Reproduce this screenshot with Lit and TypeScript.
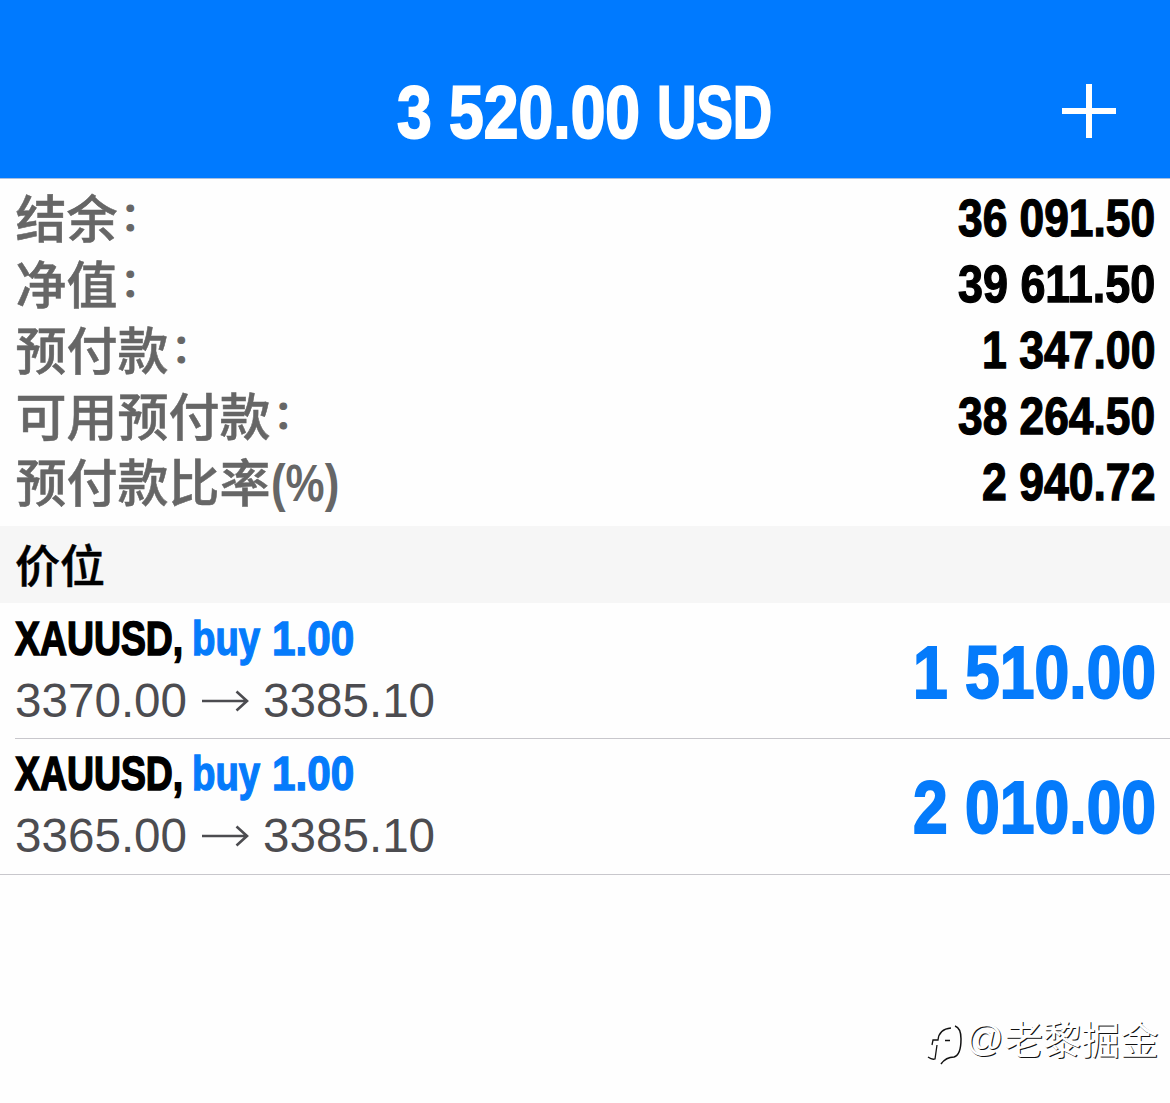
import { LitElement, html, css, PropertyValues } from 'lit';
import { customElement, property, state } from 'lit/decorators.js';
import { styleMap } from 'lit/directives/style-map.js';

interface SummaryRow {
  label: string;
  suffix?: string;
  value: string;
  width: number;
}

interface Position {
  symbol: string;
  side: string;
  volume: string;
  open: string;
  current: string;
  profit: string;
}

// Bold text squeezed horizontally to a given width
@customElement('condensed-text')
export class CondensedText extends LitElement {
  @property() text = '';
  @property({ type: Number }) size = 52;
  @property({ type: Number }) width = 100;
  @property({ type: Number }) weight = 0;
  @state() private scale = 1;

  static styles = css`
    :host {
      display: block;
      flex: none;
      font-family: 'Liberation Sans', sans-serif;
      font-weight: 700;
      line-height: 1;
      white-space: nowrap;
    }

    .text {
      display: block;
      width: max-content;
      transform-origin: 0 0;
    }
  `;

  protected updated(changed: PropertyValues) {
    if (changed.has('text') || changed.has('size') || changed.has('width')) {
      const el = this.renderRoot.querySelector('.text') as HTMLElement;
      this.style.width = `${this.width}px`;
      this.scale = this.width / el.offsetWidth;
    }
  }

  protected render() {
    return html`<span class="text" style=${styleMap({
      fontSize: `${this.size}px`,
      transform: `scaleX(${this.scale})`,
      '-webkit-text-stroke': `${this.weight}px currentColor`
    })}>${this.text}</span>`;
  }
}

@customElement('app-root')
export class TradeScreen extends LitElement {
  @state() private summary: SummaryRow[] = [
    { label: '结余', value: '36 091.50', width: 197 },
    { label: '净值', value: '39 611.50', width: 197 },
    { label: '预付款', value: '1 347.00', width: 173 },
    { label: '可用预付款', value: '38 264.50', width: 197 },
    { label: '预付款比率', suffix: '(%)', value: '2 940.72', width: 173 }
  ];

  @state() private positions: Position[] = [
    { symbol: 'XAUUSD,', side: 'buy', volume: '1.00', open: '3370.00', current: '3385.10', profit: '1 510.00' },
    { symbol: 'XAUUSD,', side: 'buy', volume: '1.00', open: '3365.00', current: '3385.10', profit: '2 010.00' }
  ];

  static styles = css`
    :host {
      display: flex;
      flex-direction: column;
      box-sizing: border-box;
      height: 1103px;
      overflow: hidden;
      background: #fefefe;
      color: #000;
      font-family: 'Liberation Sans', 'Noto Sans CJK SC', sans-serif;
    }

    .header {
      display: grid;
      grid-template-columns: 1fr auto 1fr;
      align-items: start;
      box-sizing: border-box;
      height: 179px;
      padding: 76px 54px 0 52px;
      background: #007aff;
      border-bottom: 1px solid #a9bfe0;
      color: #fff;
    }

    .title {
      grid-column: 2;
      display: flex;
      gap: 17px;
    }

    .add {
      justify-self: end;
      margin-top: 8px;
      display: block;
    }

    .summary {
      height: 340px;
      padding: 7px 15px 0 15.5px;
    }

    .summary-row {
      display: flex;
      justify-content: space-between;
      align-items: center;
      height: 66px;
    }

    .label {
      display: flex;
      height: 66px;
      margin-top: -7px;
      font: 500 51px/66px 'Noto Sans CJK SC', sans-serif;
      color: #666;
      white-space: nowrap;
      -webkit-text-stroke: 0.5px currentColor;
    }

    .colon {
      margin-left: 3px;
      font-size: 39px;
      line-height: 61px;
      -webkit-text-stroke: 1.2px currentColor;
    }

    .suffix {
      margin-top: 11px;
    }

    .section {
      height: 77px;
      padding-left: 15px;
      background: #f6f6f6;
      font: 500 45px/75px 'Noto Sans CJK SC', sans-serif;
      -webkit-text-stroke: 0.5px currentColor;
    }

    .position {
      display: flex;
      justify-content: space-between;
      height: 135px;
      margin-left: 15px;
      padding-right: 14px;
      border-bottom: 1px solid #c8c7cc;
    }

    .position:last-of-type {
      height: 136px;
      margin-top: -1px;
      margin-left: 0;
      padding-left: 15px;
    }

    .deal {
      display: flex;
      padding-top: 11px;
    }

    .side {
      margin-left: 9px;
    }

    .volume {
      margin-left: 12px;
    }

    .side,
    .volume,
    .profit {
      color: #057bfb;
    }

    .profit {
      padding-top: 33px;
    }

    .prices {
      display: flex;
      align-items: center;
      margin-top: 11px;
      font-size: 47.6px;
      line-height: 54px;
      color: #4c4c50;
    }

    .prices svg {
      margin: 0 14px 0 15px;
    }

    .watermark {
      position: absolute;
      left: 925px;
      top: 1011px;
      display: flex;
      font: 400 38.5px/52px 'Noto Sans CJK SC', sans-serif;
      color: #fff;
      text-shadow: 1px 1px 0.5px #111;
      white-space: nowrap;
    }

    .watermark svg {
      margin-top: 3px;
    }

    .at {
      margin: 0 1px;
      font-family: 'Liberation Sans', sans-serif;
      font-size: 37px;
      line-height: 56px;
    }
  `;

  private renderPosition(p: Position) {
    return html`
      <div class="position">
        <div>
          <div class="deal">
            <condensed-text .text=${p.symbol} .size=${48.5} .width=${168} .weight=${1.6}></condensed-text>
            <condensed-text class="side" .text=${p.side} .size=${48.5} .width=${68} .weight=${1.4}></condensed-text>
            <condensed-text class="volume" .text=${p.volume} .size=${48.5} .width=${82} .weight=${1.4}></condensed-text>
          </div>
          <div class="prices">
            <span>${p.open}</span>
            <svg width="47" height="22" viewBox="0 0 47 22" fill="none" stroke="currentColor" stroke-width="2.6">
              <path d="M0 11H45M34.500 1.500L45 11L34.500 20.500"></path>
            </svg>
            <span>${p.current}</span>
          </div>
        </div>
        <condensed-text class="profit" .text=${p.profit} .size=${73.5} .width=${243} .weight=${2}></condensed-text>
      </div>
    `;
  }

  protected render() {
    return html`
      <div class="header">
        <div class="title">
          <condensed-text .text=${'3 520.00'} .size=${73.5} .width=${243} .weight=${2}></condensed-text>
          <condensed-text .text=${'USD'} .size=${73.5} .width=${115} .weight=${2}></condensed-text>
        </div>
        <svg class="add" width="54" height="54" viewBox="0 0 54 54" stroke="#fff" stroke-width="6">
          <path d="M0 27H54M27 0V54"></path>
        </svg>
      </div>
      <div class="summary">
        ${this.summary.map(row => html`
          <div class="summary-row">
            <div class="label">
              <span>${row.label}</span>
              ${row.suffix
                ? html`<condensed-text class="suffix" .text=${row.suffix} .size=${51} .width=${68}></condensed-text>`
                : html`<span class="colon">：</span>`}
            </div>
            <condensed-text .text=${row.value} .size=${51.5} .width=${row.width} .weight=${1.3}></condensed-text>
          </div>
        `)}
      </div>
      <div class="section">价位</div>
      <div>${this.positions.map(p => this.renderPosition(p))}</div>
      <div class="watermark">
        <svg width="40" height="52" viewBox="0 0 40 52" fill="none" stroke="#111" stroke-width="1.300">
          <path d="M3 43Q7 46 10 45L12 31M7 31L8 26H13Q14 15 26 14M20 26.500H25"></path>
          <path d="M30 12Q36 14 36 25Q36 41 29 43Q21 43 16 50" stroke-width="1.500"></path>
        </svg>
        <span class="at">@</span>
        <span>老黎掘金</span>
      </div>
    `;
  }
}
